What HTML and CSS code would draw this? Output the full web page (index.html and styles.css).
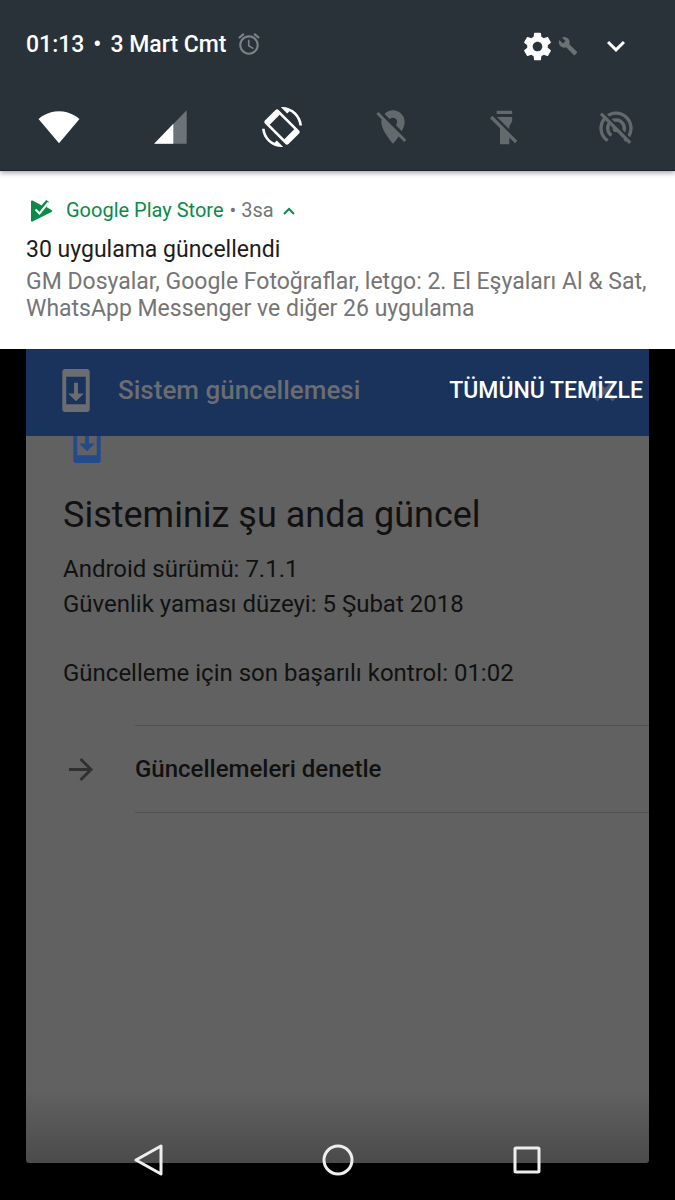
FILE: index.html
```html
<!DOCTYPE html>
<html lang="tr">
<head>
  <meta charset="utf-8">
  <meta name="viewport" content="width=device-width, initial-scale=1">
  <title>Sistem güncellemesi</title>
  <link rel="stylesheet" href="styles.css">
</head>
<body>

<header class="shade">
  <div class="status">
    <p class="clock"><span>01:13</span> <span>•</span> <span>3 Mart Cmt</span></p>
    <svg class="alarm" viewBox="0 0 24 24"><path d="M22 5.72l-4.6-3.86-1.29 1.53 4.6 3.86L22 5.72zM7.88 3.39L6.6 1.86 2 5.71l1.29 1.53 4.59-3.85zM12.5 8H11v6l4.75 2.85.75-1.23-4-2.37V8zM12 4c-4.97 0-9 4.03-9 9s4.02 9 9 9c4.97 0 9-4.03 9-9s-4.03-9-9-9zm0 16c-3.87 0-7-3.13-7-7s3.13-7 7-7 7 3.13 7 7-3.13 7-7 7z"/></svg>

    <button class="settings" aria-label="Ayarlar">
      <svg class="gear" viewBox="0 0 24 24"><path d="M19.43 12.98c.04-.32.07-.64.07-.98s-.03-.66-.07-.98l2.11-1.65c.19-.15.24-.42.12-.64l-2-3.46c-.12-.22-.39-.3-.61-.22l-2.49 1c-.52-.4-1.08-.73-1.69-.98l-.38-2.65C14.46 2.18 14.25 2 14 2h-4c-.25 0-.46.18-.49.42l-.38 2.65c-.61.25-1.17.59-1.69.98l-2.49-1c-.23-.09-.49 0-.61.22l-2 3.46c-.13.22-.07.49.12.64l2.11 1.65c-.04.32-.07.65-.07.98s.03.66.07.98l-2.11 1.65c-.19.15-.24.42-.12.64l2 3.46c.12.22.39.3.61.22l2.49-1c.52.4 1.08.73 1.69.98l.38 2.65c.03.24.24.42.49.42h4c.25 0 .46-.18.49-.42l.38-2.65c.61-.25 1.17-.59 1.69-.98l2.49 1c.23.09.49 0 .61-.22l2-3.46c.12-.22.07-.49-.12-.64l-2.11-1.65zM12 15.5c-1.93 0-3.5-1.57-3.5-3.5s1.57-3.5 3.5-3.5 3.5 1.57 3.5 3.5-1.57 3.5-3.5 3.5z"/></svg>
      <svg class="wrench" viewBox="0 0 24 24"><path d="M22.7 19l-9.1-9.1c.9-2.3.4-5-1.5-6.9-2-2-5-2.4-7.4-1.3L9 6 6 9 1.6 4.7C.4 7.1.9 10.1 2.9 12.1c1.9 1.9 4.6 2.4 6.9 1.5l9.1 9.1c.4.4 1 .4 1.4 0l2.3-2.3c.5-.4.5-1.1.1-1.4z"/></svg>
    </button>
    <button class="expand" aria-label="Genişlet">
      <svg viewBox="0 0 24 24"><path d="M16.59 8.59L12 13.17 7.41 8.59 6 10l6 6 6-6z"/></svg>
    </button>
  </div>

  <div class="tiles">
    <button class="tile" aria-label="Kablosuz">
      <svg viewBox="0 0 24 24"><path d="M12 21.8L24.300 7.200C23.500 6.500 19 2.500 12 2.500S.5 6.500-.300 7.200z"/></svg>
    </button>
    <button class="tile" aria-label="Mobil veri">
      <svg viewBox="0 0 24 24"><path class="faint" d="M2.500 22H22V2z"/><path d="M2.500 22H14V10z"/></svg>
    </button>
    <button class="tile" aria-label="Otomatik döndür">
      <svg viewBox="0 0 24 24">
        <path transform="rotate(-45 12 12)" fill-rule="evenodd" d="M7.500 2h9a1.300 1.300 0 0 1 1.300 1.300v17.400a1.300 1.300 0 0 1-1.300 1.300h-9a1.300 1.300 0 0 1-1.300-1.300V3.300a1.300 1.300 0 0 1 1.300-1.300zM7.800 5.800v12.400h8.400V5.800z"/>
        <path d="M12 0l-.7.030 3.800 3.800 1.400-1.300c3.200 1.500 5.500 4.700 5.900 8.500H24C23.500 4.800 18.300 0 12 0zM12 24l.7-.030-3.800-3.800-1.400 1.300C4.300 20 2 16.800 1.600 13H0c.5 6.200 5.700 11 12 11z"/>
      </svg>
    </button>
    <button class="tile off" aria-label="Konum kapalı">
      <svg viewBox="0 0 24 24"><path d="M12 6.500c1.380 0 2.500 1.120 2.500 2.500 0 .74-.33 1.390-.83 1.850l3.630 3.630c.98-1.860 1.700-3.800 1.700-5.480 0-3.870-3.130-7-7-7-1.980 0-3.760.83-5.040 2.150l3.190 3.190c.46-.52 1.110-.84 1.850-.84zm4.370 9.600l-4.740-4.740L3.270 3 2 4.270l3.180 3.180C5.070 7.950 5 8.470 5 9c0 5.250 7 13 7 13s1.670-1.850 3.380-4.350L18.730 21 20 19.730l-3.630-3.630z"/></svg>
    </button>
    <button class="tile off" aria-label="Fener kapalı">
      <svg viewBox="0 0 24 24">
        <path d="M7 2.300h9.300v1.900H7zM7 6h9.300v2.500L14.600 11.500V22.300H9V11.500L7 8.500z"/>
        <path class="gap" d="M5 5.200L20 20.200"/>
        <path class="slash" d="M3.700 6l15 15"/>
      </svg>
    </button>
    <button class="tile off" aria-label="Erişim noktası kapalı">
      <svg viewBox="0 0 24 24">
        <path class="arc" d="M7 20.200A9 9 0 1 1 17 20.200M9.300 17A5 5 0 1 1 14.700 17"/>
        <circle cx="12" cy="13" r="2"/>
        <path class="gap" d="M4 3.200L22 21.200"/>
        <path class="slash" d="M3 4l17.500 17.500"/>
      </svg>
    </button>
  </div>
</header>

<section class="notification">
  <div class="source">
    <svg class="play" viewBox="0 0 22 22">
      <path class="green" d="M0 1.500Q0 0 1.500.600L9 4.500L10.500 5.500L15.300 0L17.500 1.500L18 3L15.500 7L20.500 10Q22 11 20.500 12L1.500 21.500Q0 22 0 20.500z"/>
      <path class="check" d="M4.500 9.500l4 4L17.500 2.500"/>
    </svg>
    <span class="app">Google Play Store</span>
    <span class="age">• 3sa</span>
    <button class="collapse" aria-label="Daralt">
      <svg viewBox="0 0 12 8"><path d="M1 7l5-5 5 5"/></svg>
    </button>
  </div>
  <h2>30 uygulama güncellendi</h2>
  <p>GM Dosyalar, Google Fotoğraflar, letgo: 2. El Eşyaları Al &amp; Sat, WhatsApp Messenger ve diğer 26 uygulama</p>
</section>

<main class="window">
  <div class="appbar">
    <svg class="phone" viewBox="0 0 28 44"><path fill-rule="evenodd" d="M3 0h22a3 3 0 0 1 3 3v38a3 3 0 0 1-3 3H3a3 3 0 0 1-3-3V3a3 3 0 0 1 3-3zM4 8v28h20V8zM12 14h4v11h6l-8 8-8-8h6z"/></svg>
    <h1>Sistem güncellemesi</h1>
    <svg class="close" viewBox="0 0 24 24"><path d="M3 3l18 18M21 3L3 21"/></svg>
    <button class="clear-all">TÜMÜNÜ TEMİZLE</button>
  </div>

  <div class="content">
    <svg class="phone scrolled" viewBox="0 0 28 44"><path fill-rule="evenodd" d="M3 0h22a3 3 0 0 1 3 3v38a3 3 0 0 1-3 3H3a3 3 0 0 1-3-3V3a3 3 0 0 1 3-3zM4 8v28h20V8zM12 14h4v10h6l-8 8-8-8h6z"/></svg>
    <h2>Sisteminiz şu anda güncel</h2>
    <p>Android sürümü: 7.1.1<br>Güvenlik yaması düzeyi: 5 Şubat 2018</p>
    <p>Güncelleme için son başarılı kontrol: 01:02</p>
    <div class="action">
      <svg class="arrow" viewBox="0 0 26 26"><path d="M1 13h23M13 2l11 11-11 11"/></svg>
      <button class="check-updates">Güncellemeleri denetle</button>
    </div>
  </div>
</main>

<nav class="navbar">
  <button aria-label="Geri"><svg viewBox="0 0 32 32"><path d="M28 2v28L3 16z"/></svg></button>
  <button aria-label="Ana ekran"><svg viewBox="0 0 32 32"><circle cx="16" cy="16" r="14"/></svg></button>
  <button aria-label="Son uygulamalar"><svg viewBox="0 0 32 32"><rect x="4" y="4" width="24" height="24" rx="1"/></svg></button>
</nav>

</body>
</html>
```
FILE: styles.css
```css
* {
  box-sizing: border-box;
}

body {
  display: flex;
  flex-direction: column;
  position: relative;
  margin: 0;
  min-height: 100vh;
  background: #000;
  font: 400 23px/27px Roboto, sans-serif;
}

h1, h2, p {
  margin: 0;
}

button {
  border: 0;
  padding: 0;
  background: none;
  color: inherit;
  cursor: pointer;
  font: inherit;
}

svg {
  display: block;
  flex: none;
  fill: currentColor;
}

/* quick settings */

.shade {
  position: relative;
  padding: 24px 39px 23px 26px;
  background: #283238;
  border-bottom: 1px solid #1c2327;
  box-shadow: 0 2px 5px rgba(0, 0, 0, 0.35);
  color: #fff;
}

.status {
  display: flex;
  align-items: center;
  height: 40px;
}

.clock {
  display: flex;
  gap: 9px;
  font-weight: 500;
}

.alarm {
  width: 26px;
  height: 26px;
  margin-left: 10px;
  color: #7c8387;
}

.settings {
  display: flex;
  align-items: center;
  margin-left: auto;
}

.settings,
.expand {
  padding-top: 4px;
}

.gear {
  width: 33px;
  height: 33px;
}

.wrench {
  width: 20px;
  height: 20px;
  margin-left: 4px;
  color: #6b7275;
}

.expand {
  margin: 0 2px 0 20px;
}

.expand svg {
  width: 36px;
  height: 36px;
}

.tiles {
  display: flex;
  justify-content: space-between;
  margin: 43px 0 0 13px;
}

.tile svg {
  width: 40px;
  height: 40px;
  overflow: visible;
}

.off {
  color: #636a6d;
}

.faint {
  fill: #6d7479;
}

.arc,
.slash,
.gap {
  fill: none;
  stroke: currentColor;
  stroke-width: 2;
}

.gap {
  stroke: #283238;
}

/* notification */

.notification {
  padding: 26px 24px 27px 26px;
  background: #fff;
  color: #757575;
}

.source {
  display: flex;
  align-items: center;
  font-size: 20px;
}

.play {
  width: 22px;
  height: 22px;
  margin: 0 13px 0 5px;
}

.green {
  fill: #0b8a4a;
}

.check {
  fill: none;
  stroke: #fff;
  stroke-width: 2;
}

.app {
  color: #0b8a4a;
}

.age {
  margin-left: 6px;
}

.collapse svg {
  width: 12px;
  height: 8px;
  margin-left: 9px;
  fill: none;
  stroke: #0b8a4a;
  stroke-width: 2;
}

.notification h2 {
  margin: 12px 0 5px;
  color: #1c1c1c;
  font-size: 23px;
  font-weight: 400;
}

/* update screen, dimmed behind the shade */

.window {
  display: flex;
  flex: 1;
  flex-direction: column;
  margin: 0 26px 37px;
  border-radius: 0 0 3px 3px;
  background: #616161;
  color: #111;
  overflow: hidden;
}

.appbar {
  display: flex;
  align-items: center;
  position: relative;
  height: 87px;
  padding: 0 32px 4px 36px;
  background: #1a335c;
  color: #6b6d70;
}

.phone {
  width: 28px;
  height: 43px;
}

.appbar h1 {
  margin-left: 28px;
  font-size: 26px;
  font-weight: 500;
}

.close {
  width: 24px;
  height: 24px;
  margin-left: auto;
  stroke: #50596a;
  stroke-width: 4;
}

.clear-all {
  position: absolute;
  right: 6px;
  color: #fff;
  font-weight: 500;
}

.content {
  flex: 1;
  padding-left: 37px;
  font-size: 24px;
  line-height: 35px;
  overflow: hidden;
}

.scrolled {
  margin: -16px 0 0 10px;
  color: #234a8b;
}

.content h2 {
  margin: 27px 0 12px;
  font-size: 36px;
  font-weight: 400;
  line-height: 50px;
}

.content p {
  margin-bottom: 34px;
}

.action {
  display: flex;
  align-items: center;
  gap: 42px;
  padding-left: 5px;
}

.arrow {
  width: 25px;
  height: 25px;
  fill: none;
  stroke: #303030;
  stroke-width: 3;
}

.check-updates {
  flex: 1;
  height: 88px;
  border: solid #505050;
  border-width: 1px 0;
  font-weight: 500;
  text-align: left;
}

/* navigation buttons */

.navbar {
  display: flex;
  align-items: flex-end;
  justify-content: center;
  position: absolute;
  right: 0;
  bottom: 0;
  left: 0;
  height: 110px;
  padding-bottom: 24px;
  background: linear-gradient(transparent, rgba(0, 0, 0, 0.35));
  color: #eee;
}

.navbar button {
  width: 28%;
}

.navbar svg {
  width: 32px;
  height: 32px;
  margin: 0 auto;
  fill: none;
  stroke: currentColor;
  stroke-linejoin: round;
  stroke-width: 3;
}
```
